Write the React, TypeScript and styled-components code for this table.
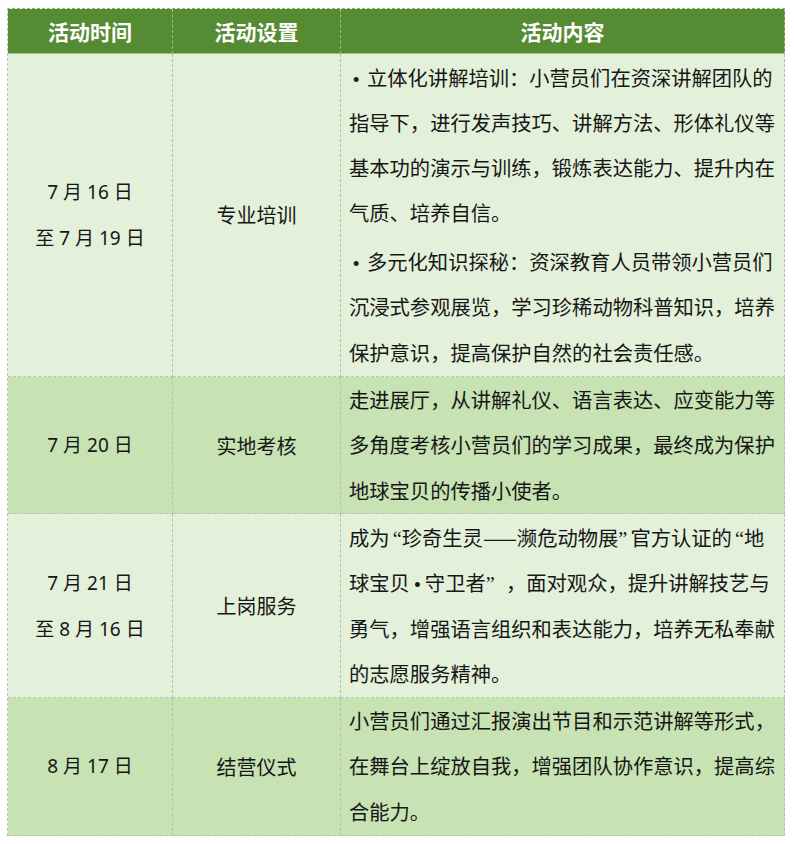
import React from "react";
import styled, { createGlobalStyle } from "styled-components";

const GlobalStyle = createGlobalStyle`
  html, body {
    margin: 0;
    padding: 0;
    background: #ffffff;
  }
  body {
    font-family: "Noto Sans CJK SC", sans-serif;
    color: #161616;
  }
`;

const Page = styled.div`
  padding: 8px 10px 0 7px;
`;

const Table = styled.div`
  display: grid;
  grid-template-columns: 165px 168px 444px;
  width: 777px;
  border-left: 1px dashed #b9c2b2;
  border-top: 1px dashed #8fae78;
`;

const HeadCell = styled.div`
  height: 44px;
  display: flex;
  align-items: center;
  justify-content: center;
  background: #558c33;
  color: #ffffff;
  font-size: 21px;
  font-weight: 700;
  border-right: 1px dashed #9fc088;
  border-bottom: 1px solid #9fc088;
`;

const Cell = styled.div<{ $tone: "light" | "mid" }>`
  background: ${(p) => (p.$tone === "mid" ? "#c7e2b3" : "#e3f0da")};
  border-right: 1px dashed #b7bfb0;
  border-bottom: 1px dashed #bcc4b5;
  display: flex;
  flex-direction: column;
  justify-content: center;
  align-items: center;
`;

const DateCell = styled(Cell)`
  font-family: "Noto Sans", "Noto Sans CJK SC", sans-serif;
  font-size: 19px;
  line-height: 46px;
`;

const SetupCell = styled(Cell)`
  font-size: 20px;
`;

const ContentCell = styled(Cell)`
  align-items: stretch;
  justify-content: flex-start;
  padding: 0.5px 4px 0.5px 8px;
  font-size: 20.3px;
  line-height: 45.3px;
`;

const Line = styled.div<{ $gap?: boolean }>`
  white-space: nowrap;
  margin-top: ${(p) => (p.$gap ? "3.5px" : "0")};
`;

const Bullet = styled.span`
  display: inline-block;
  width: 14px;
  padding-left: 4px;
  font-family: "Liberation Sans", sans-serif;
  font-size: 18px;
  line-height: 1;
`;

const Dot = styled.span`
  display: inline-block;
  width: 15px;
  text-align: center;
  font-family: "Liberation Sans", sans-serif;
  font-size: 18px;
  line-height: 1;
`;

const Quote = styled.span<{ $open?: boolean; $wide?: boolean }>`
  display: inline-block;
  width: ${(p) => (p.$wide ? "1em" : "0.6em")};
  text-align: ${(p) => (p.$open ? "right" : "left")};
  font-family: "Liberation Serif", serif;
  line-height: 1;
`;

const Q = ({ open, wide }: { open?: boolean; wide?: boolean }) => (
  <Quote $open={open} $wide={wide}>
    {open ? "“" : "”"}
  </Quote>
);

type Row = {
  tone: "light" | "mid";
  dates: string[];
  setup: string;
  lines: { text: React.ReactNode; bullet?: boolean; gap?: boolean }[];
};

const rows: Row[] = [
  {
    tone: "light",
    dates: ["7 月 16 日", "至 7 月 19 日"],
    setup: "专业培训",
    lines: [
      { text: "立体化讲解培训：小营员们在资深讲解团队的", bullet: true },
      { text: "指导下，进行发声技巧、讲解方法、形体礼仪等" },
      { text: "基本功的演示与训练，锻炼表达能力、提升内在" },
      { text: "气质、培养自信。" },
      { text: "多元化知识探秘：资深教育人员带领小营员们", bullet: true, gap: true },
      { text: "沉浸式参观展览，学习珍稀动物科普知识，培养" },
      { text: "保护意识，提高保护自然的社会责任感。" },
    ],
  },
  {
    tone: "mid",
    dates: ["7 月 20 日"],
    setup: "实地考核",
    lines: [
      { text: "走进展厅，从讲解礼仪、语言表达、应变能力等" },
      { text: "多角度考核小营员们的学习成果，最终成为保护" },
      { text: "地球宝贝的传播小使者。" },
    ],
  },
  {
    tone: "light",
    dates: ["7 月 21 日", "至 8 月 16 日"],
    setup: "上岗服务",
    lines: [
      {
        text: (
          <>
            成为<Q open />珍奇生灵——濒危动物展<Q />官方认证的<Q open />地
          </>
        ),
      },
      {
        text: (
          <>
            球宝贝<Dot>•</Dot>守卫者<Q wide />，面对观众，提升讲解技艺与
          </>
        ),
      },
      { text: "勇气，增强语言组织和表达能力，培养无私奉献" },
      { text: "的志愿服务精神。" },
    ],
  },
  {
    tone: "mid",
    dates: ["8 月 17 日"],
    setup: "结营仪式",
    lines: [
      { text: "小营员们通过汇报演出节目和示范讲解等形式，" },
      { text: "在舞台上绽放自我，增强团队协作意识，提高综" },
      { text: "合能力。" },
    ],
  },
];

const App: React.FC = () => {
  return (
    <Page>
      <GlobalStyle />
      <Table>
        <HeadCell>活动时间</HeadCell>
        <HeadCell>活动设置</HeadCell>
        <HeadCell>活动内容</HeadCell>
        {rows.map((row, idx) => (
          <React.Fragment key={idx}>
            <DateCell $tone={row.tone}>
              {row.dates.map((d) => (
                <div key={d}>{d}</div>
              ))}
            </DateCell>
            <SetupCell $tone={row.tone}>{row.setup}</SetupCell>
            <ContentCell $tone={row.tone}>
              {row.lines.map((l, i) => (
                <Line key={i} $gap={l.gap}>
                  {l.bullet && <Bullet>•</Bullet>}
                  {l.text}
                </Line>
              ))}
            </ContentCell>
          </React.Fragment>
        ))}
      </Table>
    </Page>
  );
};

export default App;
